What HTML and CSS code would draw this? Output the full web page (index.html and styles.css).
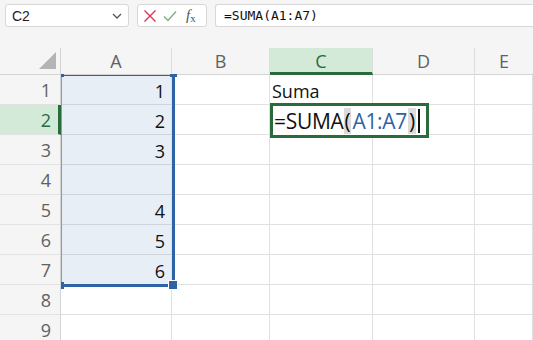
FILE: index.html
```html
<!DOCTYPE html>
<html lang="es">
<head>
    <meta charset="UTF-8">
    <title>Hoja - SUMA</title>
    <link rel="stylesheet" href="styles.css">
</head>
<body>
    <!-- Barra de fórmulas -->
    <div class="toolbar">
        <div class="name-box">
            <span>C2</span>
            <svg class="chevron" width="10" height="6" viewBox="0 0 10 6"><polyline points="1,1 5,5 9,1" fill="none" stroke="#555" stroke-width="1.3"/></svg>
        </div>
        <div class="fn-box">
            <svg width="14" height="14" viewBox="0 0 14 14"><path d="M1.5 1.5 L12.5 12.5 M12.5 1.5 L1.5 12.5" stroke="#d13a4f" stroke-width="1.4" fill="none"/></svg>
            <svg width="14" height="14" viewBox="0 0 14 14"><polyline points="1,7.5 5,11.5 13,2.5" stroke="#7fae82" stroke-width="1.4" fill="none"/></svg>
            <span class="fx"><i>f</i><sub>x</sub></span>
        </div>
        <div class="formula-box">=SUMA(A1:A7)</div>
    </div>

    <!-- Hoja -->
    <div class="sheet">
        <div class="grid">
            <div class="corner"><span class="corner-tri"></span></div>
            <div class="col-head">A</div>
            <div class="col-head">B</div>
            <div class="col-head active">C</div>
            <div class="col-head">D</div>
            <div class="col-head last">E</div>

            <div class="row-head">1</div><div class="cell sel num">1</div><div class="cell"></div><div class="cell text">Suma</div><div class="cell"></div><div class="cell"></div>
            <div class="row-head active">2</div><div class="cell sel num">2</div><div class="cell"></div><div class="cell"></div><div class="cell"></div><div class="cell"></div>
            <div class="row-head">3</div><div class="cell sel num">3</div><div class="cell"></div><div class="cell"></div><div class="cell"></div><div class="cell"></div>
            <div class="row-head">4</div><div class="cell sel num"></div><div class="cell"></div><div class="cell"></div><div class="cell"></div><div class="cell"></div>
            <div class="row-head">5</div><div class="cell sel num">4</div><div class="cell"></div><div class="cell"></div><div class="cell"></div><div class="cell"></div>
            <div class="row-head">6</div><div class="cell sel num">5</div><div class="cell"></div><div class="cell"></div><div class="cell"></div><div class="cell"></div>
            <div class="row-head">7</div><div class="cell sel num">6</div><div class="cell"></div><div class="cell"></div><div class="cell"></div><div class="cell"></div>
            <div class="row-head">8</div><div class="cell"></div><div class="cell"></div><div class="cell"></div><div class="cell"></div><div class="cell"></div>
            <div class="row-head">9</div><div class="cell"></div><div class="cell"></div><div class="cell"></div><div class="cell"></div><div class="cell"></div>
        </div>

        <!-- Rango referenciado A1:A7 -->
        <div class="range">
            <span class="handle h-tl"></span>
            <span class="handle h-tr"></span>
            <span class="handle h-bl"></span>
            <span class="handle h-br"></span>
        </div>

        <!-- Celda en edición -->
        <div class="editor">=SUMA<span class="paren">(</span><span class="ref">A1:A7</span><span class="paren">)</span><span class="caret"></span></div>
    </div>
</body>
</html>
```

FILE: styles.css
```css
/* Hoja de cálculo */
body {
    margin: 0;
    background: #f5f5f5;
    font-family: "Open Sans", "Noto Sans", sans-serif;
    overflow: hidden;
}

.toolbar {
    display: flex;
    align-items: center;
    height: 23px;
    padding: 4px 0 0 5px;
}

.name-box,
.fn-box,
.formula-box {
    height: 21px;
    background: white;
    border: 1px solid #d8d8d8;
    border-radius: 3px;
    box-sizing: content-box;
    display: flex;
    align-items: center;
}

.name-box {
    width: 110px;
    padding: 0 6px 0 6px;
    justify-content: space-between;
    font-family: "Liberation Sans", sans-serif;
    font-size: 14px;
    color: #222;
}

.chevron {
    margin-top: 1px;
}

.fn-box {
    margin-left: 8px;
    width: 60px;
    padding: 0 3px 0 5px;
    gap: 6px;
}

.fx {
    font-family: "Liberation Serif", serif;
    font-size: 15px;
    color: #555;
    margin-left: 3px;
}

.fx sub {
    font-size: 11px;
    font-style: normal;
    vertical-align: -2px;
}

.formula-box {
    margin-left: 8px;
    flex: 1;
    padding-left: 8px;
    border-right: none;
    border-radius: 3px 0 0 3px;
    font-family: "DejaVu Sans Mono", monospace;
    font-size: 13px;
    color: #111;
}

.sheet {
    position: relative;
    margin-top: 21px;
    background: white;
}

.grid {
    display: grid;
    grid-template-columns: 61px 111px 98px 103px 102px 1fr;
    grid-template-rows: 27px repeat(9, 30px);
}

.corner,
.col-head,
.row-head {
    background: #f5f5f5;
    color: #616161;
    box-sizing: border-box;
}

.corner {
    position: relative;
    border-right: 1px solid #d4d4d4;
    border-bottom: 1px solid #d4d4d4;
}

.corner-tri {
    position: absolute;
    right: 4px;
    bottom: 5px;
    width: 0;
    height: 0;
    border-left: 17px solid transparent;
    border-bottom: 17px solid #b4b4b4;
}

.col-head {
    display: flex;
    align-items: center;
    justify-content: center;
    font-size: 18px;
    border-right: 1px solid #dedede;
    border-bottom: 1px solid #d4d4d4;
}

.col-head.last {
    border-right: none;
}

.col-head.active {
    background: #d3ead9;
    color: #2a6b3b;
    border-bottom: 3px solid #2a6b3b;
    padding-top: 2px;
}

.row-head {
    display: flex;
    align-items: center;
    justify-content: flex-end;
    padding-right: 9px;
    font-size: 18px;
    border-right: 1px solid #d4d4d4;
    border-bottom: 1px solid #e2e2e2;
}

.row-head.active {
    background: #d3ead9;
    color: #2a6b3b;
    border-right: 3px solid #2a6b3b;
    padding-right: 7px;
}

.cell {
    box-sizing: border-box;
    border-right: 1px solid #e0e0e0;
    border-bottom: 1px solid #e0e0e0;
    font-size: 18px;
    color: #111;
    display: flex;
    align-items: center;
    padding-top: 2px;
}

.cell.sel {
    background: #e8eef6;
    border-bottom-color: #cdd3db;
}

.cell.num {
    justify-content: flex-end;
    padding-right: 6px;
}

.cell.text {
    padding-left: 2px;
}

/* Rango A1:A7 */
.range {
    position: absolute;
    left: 61px;
    top: 27px;
    width: 110px;
    height: 208px;
    border-top: 1px solid #2e63a6;
    border-right: 3px solid #2e63a6;
    border-bottom: 3px solid #2e63a6;
    border-left: 1px solid #7e9cc4;
}

.handle {
    position: absolute;
    background: #2e63a6;
}

.h-tl { left: -1px; top: -2px; width: 3px; height: 3px; }
.h-tr { right: -5px; top: -2px; width: 7px; height: 3px; }
.h-bl { left: -1px; bottom: -5px; width: 3px; height: 7px; }
.h-br { right: -6px; bottom: -6px; width: 8px; height: 8px; border: 1px solid white; }

/* Editor de celda */
.editor {
    position: absolute;
    left: 270px;
    top: 55px;
    width: 152px;
    height: 29px;
    border: 3px solid #2a6b3b;
    background: white;
    display: flex;
    align-items: center;
    font-size: 21px;
    letter-spacing: -0.3px;
    color: #111;
    padding-left: 1px;
}

.paren {
    background: #dcdcdc;
    line-height: 26px;
    padding: 0 1px;
}

.ref {
    color: #2e63a6;
    padding: 0 1px;
}

.caret {
    display: inline-block;
    width: 2px;
    height: 24px;
    background: #111;
    margin-left: 2px;
}
```
